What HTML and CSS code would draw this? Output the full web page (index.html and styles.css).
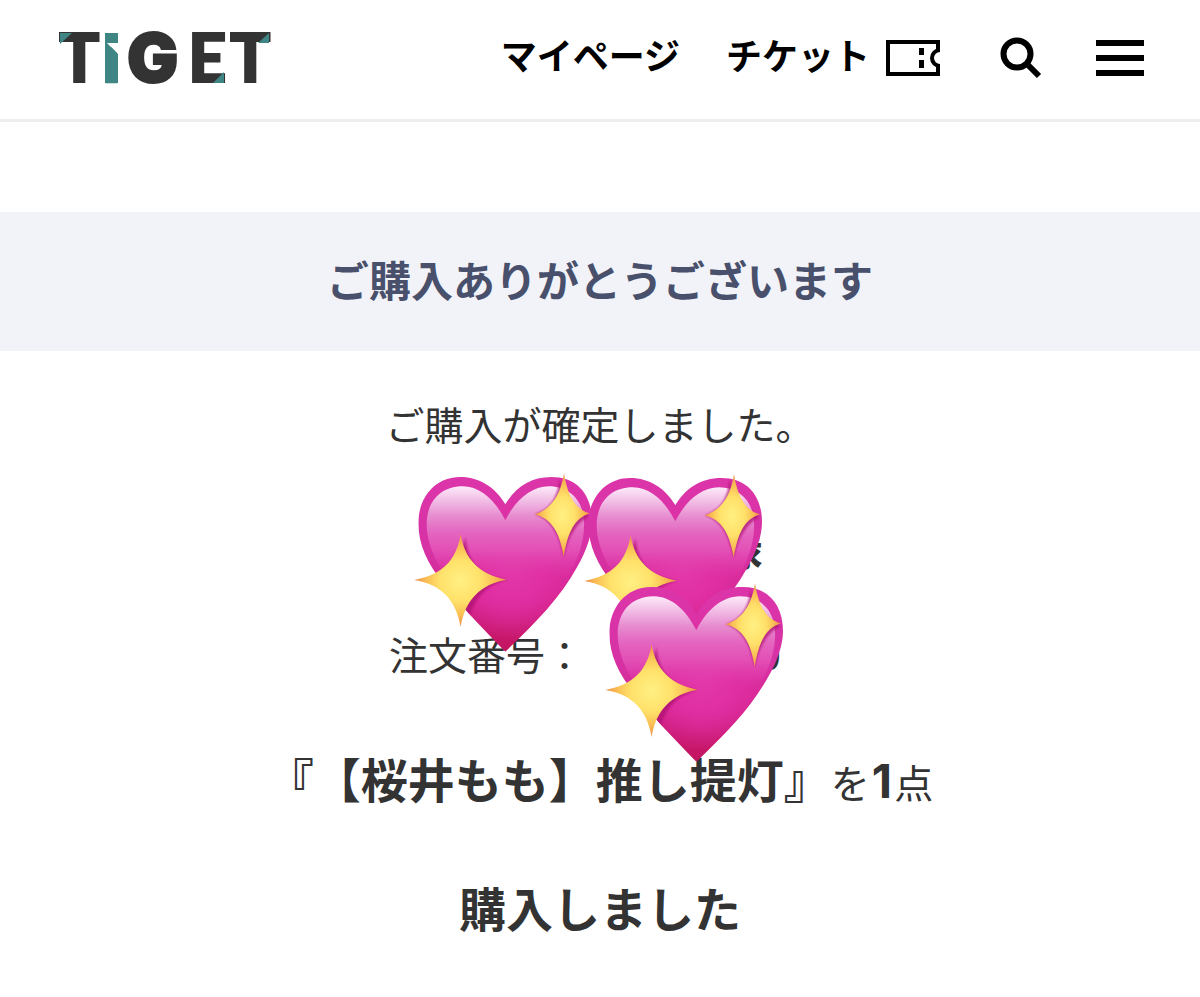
FILE: index.html
```html
<!DOCTYPE html>
<html lang="ja">
<head>
<meta charset="utf-8">
<meta name="viewport" content="width=device-width, initial-scale=1">
<title>TiGET</title>
<link rel="stylesheet" href="styles.css">
</head>
<body>
<header class="header">
  <a class="logo" href="#" aria-label="TiGET">
    <svg width="220" height="90" viewBox="-4 -18 220 90">
      <g class="logo-dark">
        <text x="-1" y="51">T</text>
        <text class="logo-g" x="67" y="51">G</text>
        <text x="128" y="51">E</text>
        <text x="170" y="51">T</text>
      </g>
      <text class="logo-i" x="40" y="52">i</text>
      <path d="M47 12H59V24Z" fill="#fff"/>
      <g fill="#3f8583">
        <path d="M0 2H12L0 13Z"/>
        <path d="M45 2H58V12H47L58 23V52H45Z"/>
        <path d="M164 41V52H153Z"/>
        <path d="M209 2V12H198Z"/>
      </g>
    </svg>
  </a>
  <nav class="nav">
    <a class="nav-link" href="#">マイページ</a>
    <a class="nav-link ticket" href="#">チケット
      <svg width="54" height="36" viewBox="0 0 54 36" aria-hidden="true">
        <path d="M52 12V2H2V34H52V24M54 10A8 8 0 0 0 54 26" fill="none" stroke="#000" stroke-width="4"/>
        <path d="M33 8h5v7h-5zM33 20h5v8h-5z"/>
      </svg>
    </a>
    <button class="icon-button search" type="button" aria-label="検索">
      <svg width="42" height="42" viewBox="0 0 42 42"><circle cx="17" cy="17" r="13.5" fill="none" stroke="#000" stroke-width="6"/><path d="M26 26L39 39" stroke="#000" stroke-width="6"/></svg>
    </button>
    <button class="icon-button" type="button" aria-label="メニュー">
      <svg width="48" height="36" viewBox="0 0 48 36"><path d="M0 0h48v6H0zM0 15h48v6H0zM0 30h48v6H0z"/></svg>
    </button>
  </nav>
</header>
<main>
  <h1 class="title">ご購入ありがとうございます</h1>
  <section class="order">
    <p>ご購入が確定しました。</p>
    <p class="customer">様</p>
    <p class="number"><span>注文番号：</span><span>0</span></p>
    <p class="item"><strong>『【桜井もも】推し提灯』</strong>を<strong class="count">1</strong>点</p>
    <p class="result"><strong>購入しました</strong></p>
    <div class="stickers" aria-hidden="true">
      <svg class="heart" viewBox="39 36 540 540">
        <defs>
          <linearGradient id="rim" x1="0" y1="0" x2="0" y2="1">
            <stop offset="0" stop-color="#dc35aa"/><stop offset=".45" stop-color="#d632a4"/><stop offset=".68" stop-color="#d4218c"/><stop offset=".85" stop-color="#c8186e"/><stop offset="1" stop-color="#c2155f"/>
          </linearGradient>
          <radialGradient id="glow" gradientUnits="userSpaceOnUse" cx="335" cy="320" r="220">
            <stop offset="0" stop-color="#e339aa"/><stop offset=".45" stop-color="#e02fa3"/><stop offset="1" stop-color="#e02fa3" stop-opacity="0"/>
          </radialGradient>
          <linearGradient id="gloss" gradientUnits="userSpaceOnUse" x1="0" y1="76" x2="0" y2="350">
            <stop offset="0" stop-color="#fdeaf9"/><stop offset=".15" stop-color="#f2bfe6"/><stop offset=".32" stop-color="#e78dd0"/><stop offset=".5" stop-color="#e466c0"/><stop offset=".7" stop-color="#e34fb5"/><stop offset="1" stop-color="#e238aa" stop-opacity="0"/>
          </linearGradient>
          <radialGradient id="gold">
            <stop offset="0" stop-color="#fff083"/><stop offset=".45" stop-color="#ffe16a"/><stop offset=".75" stop-color="#f9bd53"/><stop offset="1" stop-color="#e98d46"/>
          </radialGradient>
          <clipPath id="heart-clip"><path d="M316 130C286 80 240 48 180 48C105 48 55 110 55 187C55 250 83 310 130 367C180 431 235 490 316 572C405 487 480 410 530 320C560 270 576 220 576 180C576 100 530 48 455 48C390 48 346 80 316 130Z"/></clipPath>
          <filter id="soft" x="-20%" y="-20%" width="140%" height="140%"><feGaussianBlur stdDeviation="3"/></filter>
          <g id="sparkle-heart">
            <g clip-path="url(#heart-clip)">
              <path d="M40 36H580V576H40Z" fill="url(#rim)"/>
              <path d="M40 36H580V576H40Z" fill="url(#glow)"/>
              <path d="M316 178C288 122 244 76 188 76C119 76 80 125 80 190C80 245 105 300 140 350H500C535 300 555 235 552 180C549 115 505 76 447 76C390 76 344 122 316 178Z" fill="url(#gloss)"/>
              <g fill="#ae1471" fill-opacity=".75" filter="url(#soft)">
                <path d="M196 228C205 308 240 345 320 356C245 375 215 430 205 485C180 420 135 372 60 357C140 345 180 300 196 228Z"/>
                <path d="M479 50C474 110 450 144 405 160C450 176 475 212 491 288C504 222 535 180 570 165C530 148 492 120 479 50Z"/>
              </g>
            </g>
            <g fill="url(#gold)">
              <path d="M182 220C194 296 239 341 320 356C240 370 195 418 182 498C168 418 126 371 43 357C128 341 169 298 182 220Z"/>
              <path d="M492 37C502 101 524 146 570 157C524 171 503 214 491 288C480 216 456 173 403 160C455 145 482 101 492 37Z"/>
            </g>
          </g>
        </defs>
        <use href="#sparkle-heart"/>
      </svg>
      <svg class="heart second" viewBox="39 36 540 540"><use href="#sparkle-heart"/></svg>
      <svg class="heart third" viewBox="39 36 540 540"><use href="#sparkle-heart"/></svg>
    </div>
  </section>
</main>
</body>
</html>
```
FILE: styles.css
```css
* { box-sizing: border-box; }
body {
  margin: 0;
  background: #fff;
  color: #333;
  font-family: "Noto Sans CJK JP", sans-serif;
  text-spacing-trim: space-all;
}
.header {
  display: flex;
  align-items: center;
  justify-content: space-between;
  height: 122px;
  padding: 0 56px 4px;
  border-bottom: 3px solid #eee;
}
.logo { display: flex; }
.logo svg, .nav svg { display: block; }
.logo-dark {
  fill: #333;
  stroke: #333;
  stroke-width: 2px;
  font: 900 67px Lato, sans-serif;
}
.logo-g { font: 900 68px Inter, sans-serif; }
.logo-i { fill: #3f8583; font: bold 66px "DejaVu Sans", sans-serif; }
.nav { display: flex; align-items: center; }
.nav-link {
  padding-bottom: 8px;
  color: #000;
  font-size: 36px;
  font-weight: 700;
  line-height: 48px;
  text-decoration: none;
  white-space: nowrap;
}
.ticket {
  display: flex;
  align-items: center;
  gap: 16px;
  margin-left: 46px;
}
.ticket svg { margin-top: 8px; }
.icon-button {
  margin: 0 0 0 54px;
  padding: 0;
  border: 0;
  background: none;
}
.search { margin-left: 60px; }
.title {
  margin: 90px 0 0;
  padding: 37px 0 42px;
  background: #f2f3f8;
  color: #48506c;
  font-size: 42px;
  font-weight: 700;
  line-height: 60px;
  text-align: center;
}
.order {
  position: relative;
  padding: 42px 0 20px;
  font-size: 39px;
  text-align: center;
}
.order p { margin: 0 0 55px; line-height: 60px; }
.order strong { font-size: 47px; line-height: 1; }
.order .customer {
  margin-bottom: 48px;
  padding: 7px 0 0 278px;
  font-size: 47px;
  font-weight: 700;
}
.order .number {
  display: flex;
  justify-content: space-between;
  width: 422px;
  margin: 0 auto 68px;
  padding-right: 30px;
}
.order .item { margin-bottom: 69px; }
.order .result { margin-bottom: 0; }
.order .count { padding: 0 2px; font-family: Inter, sans-serif; }
.stickers {
  position: absolute;
  top: 122px;
  left: calc(50% - 187px);
}
.heart {
  position: absolute;
  top: 0;
  left: 0;
  width: 180px;
  height: 180px;
}
.second { top: 1px; left: 170px; }
.third { top: 110px; left: 191px; }
```
